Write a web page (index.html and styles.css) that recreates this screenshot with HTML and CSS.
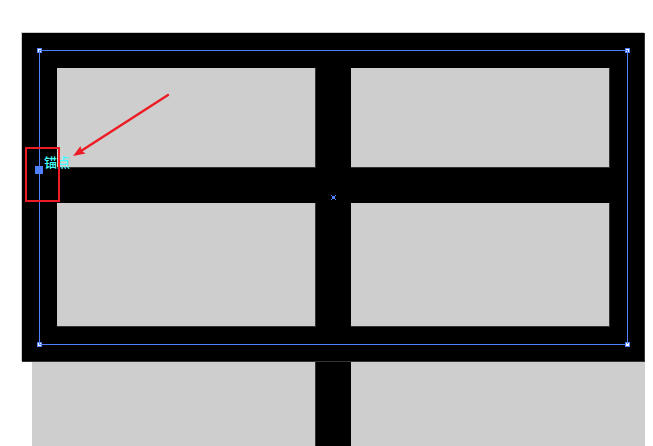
FILE: index.html
```html
<!DOCTYPE html>
<html lang="zh-CN">
<head>
<meta charset="utf-8">
<title>锚点</title>
<link rel="stylesheet" href="styles.css">
</head>
<body>
<main class="artboard">
  <section class="frame">
    <div class="pane"></div>
    <div class="pane"></div>
    <div class="pane"></div>
    <div class="pane"></div>
    <div class="selection">
      <svg class="handle top left" viewBox="0 0 5 5"><path fill="#4f80ff" d="M0 0h5v5H0z"/><path fill="#fff" d="M1 1h3v1H2v2H1zM3 3h1v1H3z"/></svg>
      <svg class="handle top right" viewBox="0 0 5 5"><path fill="#4f80ff" d="M0 0h5v5H0z"/><path fill="#fff" d="M1 1h3v3H3V2H1zM1 3h1v1H1z"/></svg>
      <svg class="handle bottom left" viewBox="0 0 5 5"><path fill="#4f80ff" d="M0 0h5v5H0z"/><path fill="#fff" d="M1 1h1v2h2v1H1zM3 1h1v1H3z"/></svg>
      <svg class="handle bottom right" viewBox="0 0 5 5"><path fill="#4f80ff" d="M0 0h5v5H0z"/><path fill="#fff" d="M3 1h1v3H1V2h2zM1 1h1v1H1z"/></svg>
    </div>
    <svg class="center" viewBox="0 0 5 5"><path fill="#4f80ff" d="M0 0h1v1h3V0h1v1H4v3h1v1H4V4H1v1H0V4h1V1H0z"/></svg>
    <div class="anchor"></div>
    <span class="hint">锚点</span>
    <div class="callout"></div>
    <svg class="arrow" viewBox="0 0 100 66"><path d="M97 2L10 58" stroke="#ed1c24" stroke-width="2.4" stroke-linecap="round"/><path fill="#ed1c24" d="M2 63L9.500 53L10.500 57.500L14.500 60.500z"/></svg>
  </section>
  <section class="lower">
    <div class="pane"></div>
    <div class="post"></div>
    <div class="pane"></div>
  </section>
</main>
</body>
</html>
```
FILE: styles.css
```css
* { box-sizing: border-box; }

body {
  margin: 0;
  background: #fff;
  font-family: "Liberation Sans", "Noto Sans CJK SC", sans-serif;
}

.artboard {
  min-height: 100vh;
  padding: 33px 8px 0 22px;
  display: flex;
  flex-direction: column;
}

.frame {
  position: relative;
  display: grid;
  grid-template-columns: 1fr 1fr;
  grid-template-rows: 100px 124px;
  gap: 35px;
  padding: 35px;
  background: #000;
  box-shadow: -1px -1px 0 #ccc, inset -1px -1px 0 #333;
}

.pane { background: #cecece; }

.frame .pane { box-shadow: inset -1px -1px 0 #333; }

.lower {
  flex: 1;
  display: grid;
  grid-template-columns: 284fr 35px 294fr;
  margin-left: 10px;
}

.lower .pane:first-child { box-shadow: inset -1px 0 0 #333; }

.post { background: #000; }

.selection {
  position: absolute;
  inset: 17px;
  border: 1px solid #4f80ff;
}

.handle {
  position: absolute;
  width: 5px;
  height: 5px;
}

.top { top: -3px; }
.bottom { bottom: -3px; }
.left { left: -3px; }
.right { right: -3px; }

.center {
  position: absolute;
  left: calc(50% - 3px);
  top: calc(50% - 3px);
  width: 5px;
  height: 5px;
}

.center path { shape-rendering: crispEdges; }

.anchor {
  position: absolute;
  left: 13px;
  top: 133px;
  width: 8px;
  height: 8px;
  background: #4f80ff;
}

.hint {
  position: absolute;
  left: 22px;
  top: 120px;
  font-size: 13px;
  font-weight: 500;
  line-height: 20px;
  color: #4ff;
}

.callout {
  position: absolute;
  left: 3px;
  top: 114px;
  width: 35px;
  height: 55px;
  border: 2px solid #ed1c24;
}

.arrow {
  position: absolute;
  left: 49px;
  top: 60px;
  width: 100px;
  height: 66px;
}
```
